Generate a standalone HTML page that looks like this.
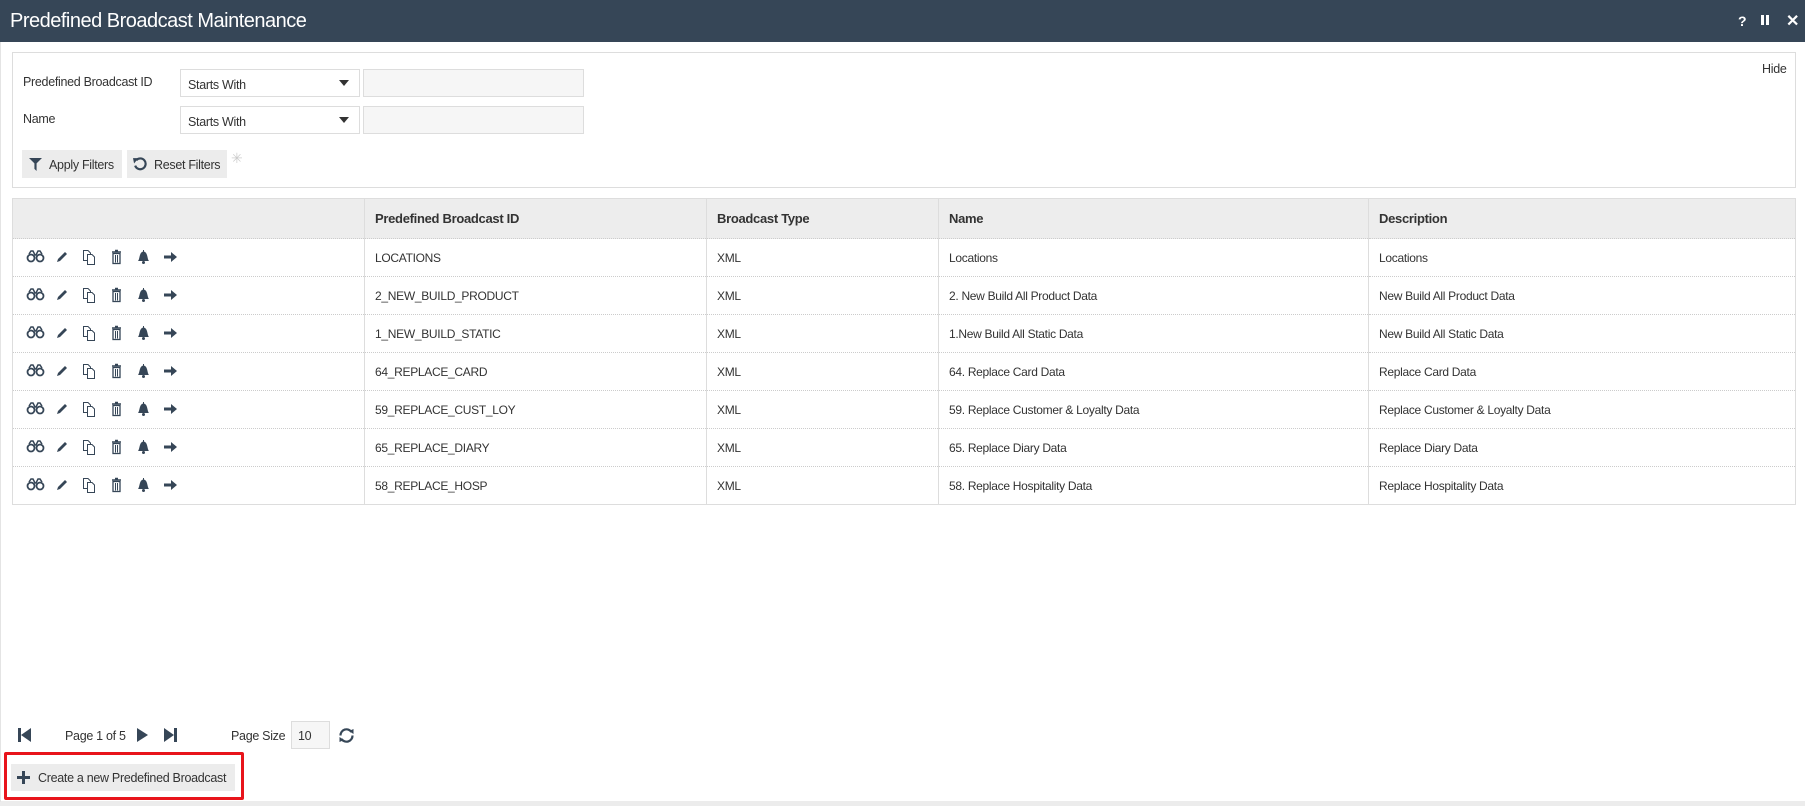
<!DOCTYPE html>
<html><head><meta charset="utf-8"><style>
*{margin:0;padding:0;box-sizing:border-box}
body{width:1805px;height:806px;position:relative;background:#fff;font-family:"Liberation Sans",Arial,sans-serif;font-size:12px;color:#333;overflow:hidden;letter-spacing:-0.3px}
.a{position:absolute;white-space:nowrap}
.hdr{left:0;top:0;width:1805px;height:42px;background:#364657;color:#fff}
.hdr .t{position:absolute;left:10px;top:10px;font-size:20px;letter-spacing:-0.5px}
.panel{left:12px;top:52px;width:1784px;height:136px;border:1px solid #ddd}
.sel{border:1px solid #ddd;background:#fff;height:28px;width:180px;padding:8px 7px;font-size:12.5px}
.inp{border:1px solid #ddd;background:#f6f6f6;height:28px;width:221px}
.btn{background:#ececec;height:28px;top:150px;font-size:12.5px}
table{position:absolute;left:12px;top:198px;width:1784px;border-collapse:collapse;border:1px solid #ddd}
th{background:#ededed;height:40px;text-align:left;padding-left:10px;font-weight:bold;border-left:1px solid #ddd;font-size:13px}
td{height:38px;padding-left:10px;border-left:1px solid #ddd;border-top:1px dotted #ccc}
th:first-child,td:first-child{border-left:none}
svg{display:block}
</style></head><body>
<div class="a hdr"><div class="t">Predefined Broadcast Maintenance</div>
<div class="a" style="left:1738px;top:13px;font-weight:bold;font-size:14px">?</div>
<div class="a" style="left:1761px;top:15px;width:3px;height:10px;background:#fff"></div>
<div class="a" style="left:1766px;top:15px;width:3px;height:10px;background:#fff"></div>
<div class="a" style="left:1786px;top:11px;font-weight:bold;font-size:16px">✕</div>
</div>
<div class="a panel"></div>
<div class="a" style="left:1762px;top:62px;font-size:12.5px">Hide</div>
<div class="a" style="left:23px;top:75px;font-size:12.5px;letter-spacing:-0.3px">Predefined Broadcast ID</div>
<div class="a" style="left:23px;top:112px;font-size:12.5px">Name</div>
<div class="a sel" style="left:180px;top:69px">Starts With</div>
<div class="a sel" style="left:180px;top:106px">Starts With</div>
<div class="a" style="left:339px;top:80px;border:5px solid transparent;border-top:6px solid #333;border-bottom:0"></div>
<div class="a" style="left:339px;top:117px;border:5px solid transparent;border-top:6px solid #333;border-bottom:0"></div>
<div class="a inp" style="left:363px;top:69px"></div>
<div class="a inp" style="left:363px;top:106px"></div>
<div class="a btn" style="left:22px;width:100px"><svg class="a" style="left:7px;top:8px" width="13" height="13" viewBox="0 0 12 12"><path d="M0 0H12L7 5V12L5 10V5Z" fill="#364657"/></svg><span class="a" style="left:27px;top:8px">Apply Filters</span></div>
<div class="a btn" style="left:127px;width:100px"><svg class="a" style="left:6px;top:7px" width="14" height="14" viewBox="0 0 13 13"><path d="M3 3A5 5 0 1 1 2 8" fill="none" stroke="#364657" stroke-width="2"/><path d="M0 1L5 1L1 6Z" fill="#364657"/></svg><span class="a" style="left:27px;top:8px">Reset Filters</span></div>
<div class="a" style="left:231px;top:150px;color:#ccc;font-size:14px">✳</div>
<table>
<tr><th style="width:352px"></th><th style="width:342px">Predefined Broadcast ID</th><th style="width:232px">Broadcast Type</th><th style="width:430px">Name</th><th>Description</th></tr>
<tr><td></td><td>LOCATIONS</td><td>XML</td><td>Locations</td><td>Locations</td></tr>
<tr><td></td><td>2_NEW_BUILD_PRODUCT</td><td>XML</td><td>2. New Build All Product Data</td><td>New Build All Product Data</td></tr>
<tr><td></td><td>1_NEW_BUILD_STATIC</td><td>XML</td><td>1.New Build All Static Data</td><td>New Build All Static Data</td></tr>
<tr><td></td><td>64_REPLACE_CARD</td><td>XML</td><td>64. Replace Card Data</td><td>Replace Card Data</td></tr>
<tr><td></td><td>59_REPLACE_CUST_LOY</td><td>XML</td><td>59. Replace Customer &amp; Loyalty Data</td><td>Replace Customer &amp; Loyalty Data</td></tr>
<tr><td></td><td>65_REPLACE_DIARY</td><td>XML</td><td>65. Replace Diary Data</td><td>Replace Diary Data</td></tr>
<tr><td></td><td>58_REPLACE_HOSP</td><td>XML</td><td>58. Replace Hospitality Data</td><td>Replace Hospitality Data</td></tr>
</table>
<svg class="a" style="left:0;top:238px" width="200" height="266">
<defs><g id="r" fill="#364657" stroke="#364657">
<circle cx="31" cy="1" r="3.5" fill="none" stroke-width="1.8"/><circle cx="40" cy="1" r="3.5" fill="none" stroke-width="1.8"/><path d="M29 -3L31 -6H33L35 -2H36L38 -6H40L42 -3" stroke-width="1.5" fill="none"/>
<path d="M57 5L58 2L65 -5L67 -3L60 4Z" stroke="none"/>
<path d="M83.5 -6.5H88L90.5 -4V3.5H83.5Z" fill="none" stroke-width="1"/><path d="M87.5 -2.5H92L94.5 0V7.5H87.5Z" fill="#fff" stroke-width="1"/>
<path d="M112 -5H121M115 -6.5H118" stroke-width="1.4"/><rect x="113" y="-3.5" width="7" height="10" fill="none" stroke-width="1.3"/><path d="M115.5 -2V5.5M117.5 -2V5.5" stroke-width="1"/>
<path d="M138 4C140 2 139 -5 143.5 -5.5C148 -5 147 2 149 4Z" stroke="none"/><circle cx="143.5" cy="5.5" r="1.5" stroke="none"/><rect x="143" y="-7" width="1" height="2" stroke="none"/>
<path d="M164 -1.5H171V-5L177 0L171 5V1.5H164Z" stroke="none"/>
</g></defs>
<use href="#r" y="19"/><use href="#r" y="57"/><use href="#r" y="95"/><use href="#r" y="133"/><use href="#r" y="171"/><use href="#r" y="209"/><use href="#r" y="247"/>
</svg>
<svg class="a" style="left:18px;top:727px" width="14" height="16"><rect x="0" y="1" width="3" height="14" fill="#364657"/><path d="M13 1V15L3 8Z" fill="#364657"/></svg>
<div class="a" style="left:65px;top:729px;font-size:12.5px">Page 1 of 5</div>
<svg class="a" style="left:137px;top:727px" width="12" height="16"><path d="M0 1V15L11 8Z" fill="#364657"/></svg>
<svg class="a" style="left:164px;top:727px" width="14" height="16"><path d="M0 1V15L10 8Z" fill="#364657"/><rect x="10" y="1" width="3" height="14" fill="#364657"/></svg>
<div class="a" style="left:231px;top:729px;font-size:12.5px">Page Size</div>
<div class="a" style="left:291px;top:721px;width:39px;height:28px;border:1px solid #ddd;background:#f6f6f6;padding:7px 0 0 6px;font-size:12.5px">10</div>
<svg class="a" style="left:338px;top:727px" width="17" height="17" viewBox="0 0 17 17"><path d="M2.5 8.5A6 6 0 0 1 13.5 5M14.5 8.5A6 6 0 0 1 3.5 12" fill="none" stroke="#364657" stroke-width="2.2"/><path d="M11 4L15.5 2V7Z M6 13L1.5 15V10Z" fill="#364657"/></svg>
<div class="a" style="left:4px;top:752px;width:240px;height:48px;border:3px solid #e8141b;border-radius:2px"></div>
<div class="a" style="left:11px;top:764px;width:224px;height:27px;background:#ececec"></div>
<svg class="a" style="left:17px;top:771px" width="13" height="13"><path d="M5 0H8V5H13V8H8V13H5V8H0V5H5Z" fill="#364657"/></svg>
<div class="a" style="left:38px;top:771px;font-size:12.5px">Create a new Predefined Broadcast</div>
<div class="a" style="left:0;top:801px;width:1805px;height:5px;background:#ececec"></div>
<div class="a" style="left:0;top:42px;width:1px;height:760px;background:#e4e4e4"></div>
</body></html>
